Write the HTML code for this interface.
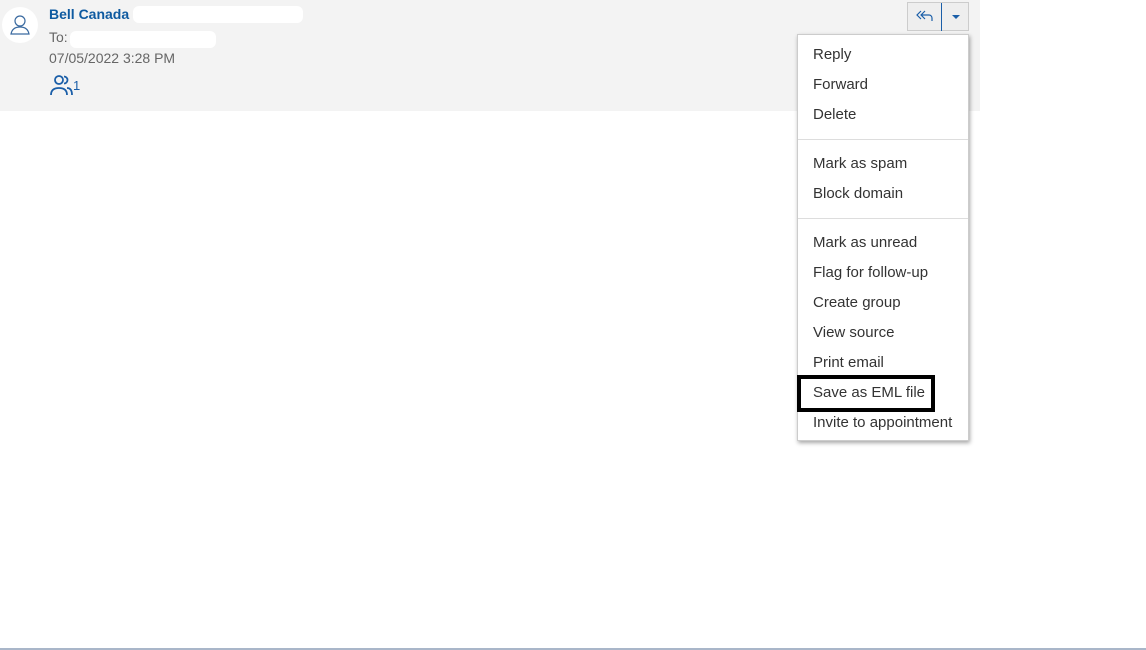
<!DOCTYPE html>
<html><head><style>
body{margin:0;width:1146px;height:650px;position:relative;background:#fff;font-family:"Liberation Sans",sans-serif;overflow:hidden}
.hdr{position:absolute;left:0;top:0;width:980px;height:111px;background:#f3f3f3}
.av{position:absolute;left:2px;top:7px;width:36px;height:36px;border-radius:50%;background:#fff}
.t{position:absolute;font-size:14px;color:#666}
.wh{position:absolute;background:#fff;border-radius:6px}
.btn{position:absolute;left:907px;top:2px;width:62px;height:29px;border:1px solid #ccc;background:#eee;box-sizing:border-box}
.menu{position:absolute;left:797px;top:34px;width:172px;height:407px;background:#fff;border:1px solid #ccc;box-sizing:border-box;box-shadow:1px 2px 4px rgba(0,0,0,.35)}
.it{position:absolute;left:15px;font-size:15px;color:#333}
.sep{position:absolute;left:0;width:170px;height:1px;background:#ddd}
</style></head><body>
<div class="hdr">
<div class="av"><svg width="36" height="36" viewBox="0 0 36 36" fill="none" stroke="#3a6aa0" stroke-width="1.2"><circle cx="18" cy="14" r="5"/><path d="M9 27c1-5 4-7 9-7s8 2 9 7z"/></svg></div>
<div class="t" style="left:49px;top:6px;color:#0e5aa0;font-weight:bold">Bell Canada</div>
<div class="wh" style="left:133px;top:6px;width:170px;height:17px"></div>
<div class="t" style="left:49px;top:29px">To:</div>
<div class="wh" style="left:70px;top:31px;width:146px;height:17px"></div>
<div class="t" style="left:49px;top:50px">07/05/2022 3:28 PM</div>
<svg style="position:absolute;left:50px;top:74px" width="32" height="22" viewBox="0 0 32 22" fill="none" stroke="#1a5ea8" stroke-width="1.8"><circle cx="9" cy="6" r="4"/><path d="M1 21c0-5 3-7 8-7s8 2 8 7"/><path d="M14 2.5a3.5 3.5 0 1 1 0 7M17 14c3 0 5 2 5 7"/><text x="23" y="16" font-size="13" fill="#1a5ea8" stroke="none" font-family="Liberation Sans">1</text></svg>
<div class="btn"><svg style="position:absolute;left:8px;top:6px" width="18" height="14" viewBox="0 0 18 14" fill="none" stroke="#1a5ea8" stroke-width="1.2"><path d="M5 2L1 6l4 4M9 2L5 6l4 4M5 6h8a3 3 0 0 1 3 3v3"/></svg>
<div style="position:absolute;left:33px;top:0;width:1px;height:28px;background:#1a5ea8"></div>
<div style="position:absolute;left:44px;top:12px;width:0;height:0;border-left:4px solid transparent;border-right:4px solid transparent;border-top:4px solid #1a5ea8"></div></div>
</div>
<div class="menu">
<div class="it" style="top:11px">Reply</div>
<div class="it" style="top:41px">Forward</div>
<div class="it" style="top:71px">Delete</div>
<div class="sep" style="top:104px"></div>
<div class="it" style="top:120px">Mark as spam</div>
<div class="it" style="top:150px">Block domain</div>
<div class="sep" style="top:183px"></div>
<div class="it" style="top:199px">Mark as unread</div>
<div class="it" style="top:229px">Flag for follow-up</div>
<div class="it" style="top:259px">Create group</div>
<div class="it" style="top:289px">View source</div>
<div class="it" style="top:319px">Print email</div>
<div class="it" style="top:349px">Save as EML file</div>
<div class="it" style="top:379px">Invite to appointment</div>
</div>
<div style="position:absolute;left:797px;top:375px;width:138px;height:37px;border:4px solid #000;box-sizing:border-box"></div>
<div style="position:absolute;left:0;top:648px;width:1146px;height:2px;background:#a9b6c9"></div>
</body></html>
